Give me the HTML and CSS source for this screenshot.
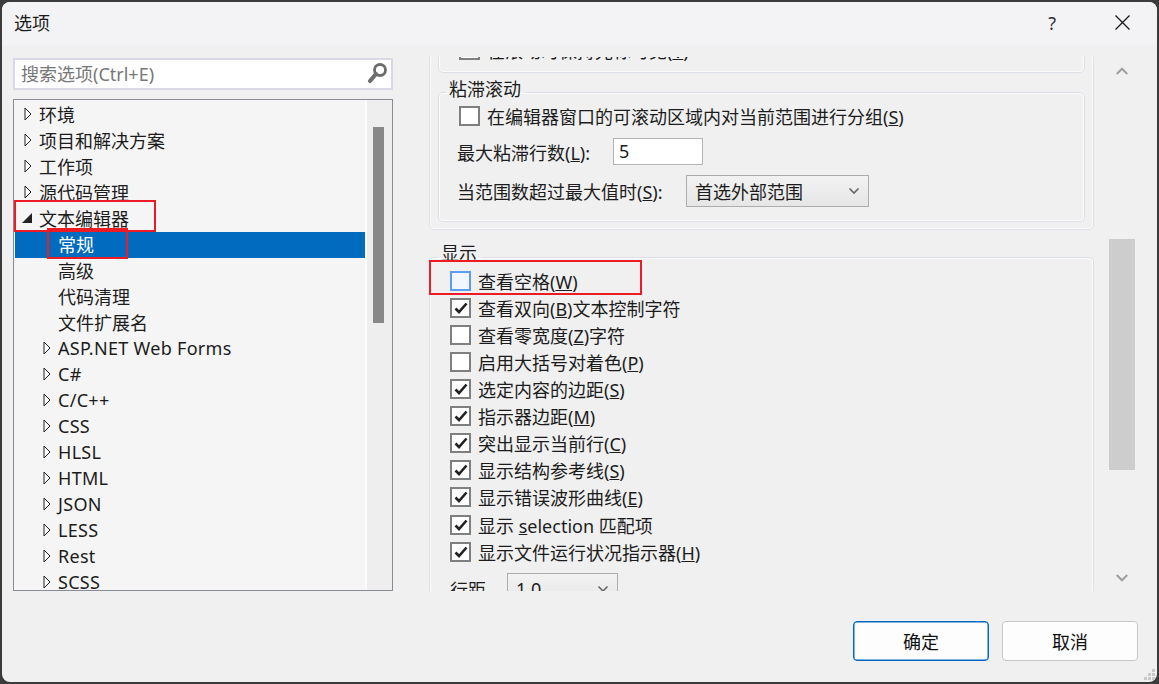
FILE: index.html
```html
<!DOCTYPE html>
<html lang="zh-CN">
<head>
    <meta charset="UTF-8">
    <title>选项</title>
    <link rel="stylesheet" href="styles.css">
</head>
<body>
    <svg class="defs" width="0" height="0">
        <symbol id="arrow" viewBox="0 0 8 14"><path d="M1 1 L7 7 L1 13 Z" fill="#fff" stroke="#222" stroke-width="1"/></symbol>
        <symbol id="tick" viewBox="0 0 14 12"><path d="M1.5 6.5 L5 10 L12.5 1.5" fill="none" stroke="#222" stroke-width="2.6"/></symbol>
        <symbol id="chev" viewBox="0 0 12 8"><path d="M1.5 1.5 L6 6 L10.5 1.5" fill="none" stroke="#666" stroke-width="1.6"/></symbol>
    </svg>
    <div class="dialog">
        <div class="titlebar">
            <span class="title">选项</span>
            <span class="help">?</span>
            <svg class="close" width="15" height="15" viewBox="0 0 15 15"><path d="M0.5 0.5 L14.5 14.5 M14.5 0.5 L0.5 14.5" stroke="#1a1a1a" stroke-width="1.3"/></svg>
        </div>
        <div class="main">
            <div class="sidebar">
                <div class="search">
                    <span>搜索选项(Ctrl+E)</span>
                    <svg width="22" height="24" viewBox="0 0 22 24"><circle cx="13" cy="9" r="5.5" fill="none" stroke="#6c6c6c" stroke-width="2.8"/><path d="M9 13 L3 20" stroke="#6c6c6c" stroke-width="4.2" stroke-linecap="round"/></svg>
                </div>
                <div class="tree">
                    <ul class="tree-list">
                        <li class="row"><svg class="arrow"><use href="#arrow"/></svg>环境</li>
                        <li class="row"><svg class="arrow"><use href="#arrow"/></svg>项目和解决方案</li>
                        <li class="row"><svg class="arrow"><use href="#arrow"/></svg>工作项</li>
                        <li class="row"><svg class="arrow"><use href="#arrow"/></svg>源代码管理</li>
                        <li class="row"><svg class="open-arrow" width="8" height="14" viewBox="0 0 10 10"><path d="M0 10 L10 10 L10 0 Z" fill="#222"/></svg>文本编辑器</li>
                        <li class="row leaf selected">常规</li>
                        <li class="row leaf">高级</li>
                        <li class="row leaf">代码清理</li>
                        <li class="row leaf">文件扩展名</li>
                        <li class="row sub"><svg class="arrow"><use href="#arrow"/></svg>ASP.NET Web Forms</li>
                        <li class="row sub"><svg class="arrow"><use href="#arrow"/></svg>C#</li>
                        <li class="row sub"><svg class="arrow"><use href="#arrow"/></svg>C/C++</li>
                        <li class="row sub"><svg class="arrow"><use href="#arrow"/></svg>CSS</li>
                        <li class="row sub"><svg class="arrow"><use href="#arrow"/></svg>HLSL</li>
                        <li class="row sub"><svg class="arrow"><use href="#arrow"/></svg>HTML</li>
                        <li class="row sub"><svg class="arrow"><use href="#arrow"/></svg>JSON</li>
                        <li class="row sub"><svg class="arrow"><use href="#arrow"/></svg>LESS</li>
                        <li class="row sub"><svg class="arrow"><use href="#arrow"/></svg>Rest</li>
                        <li class="row sub"><svg class="arrow"><use href="#arrow"/></svg>SCSS</li>
                    </ul>
                    <div class="tree-scroll"><div class="tree-thumb"></div></div>
                </div>
            </div>
            <div class="panel">
                <!-- first group is scrolled partly out of view -->
                <div class="group outer scrolled">
                    <div class="group inner first">
                        <div class="option"><span class="box"></span><span>在滚动时保持光标可见(<u>V</u>)</span></div>
                    </div>
                    <fieldset class="group inner sticky">
                        <legend>粘滞滚动</legend>
                        <div class="option"><span class="box"></span><span>在编辑器窗口的可滚动区域内对当前范围进行分组(<u>S</u>)</span></div>
                        <div class="field count">
                            <label>最大粘滞行数(<u>L</u>):</label>
                            <span class="textbox">5</span>
                        </div>
                        <div class="field limit">
                            <label>当范围数超过最大值时(<u>S</u>):</label>
                            <span class="combo wide">首选外部范围<svg width="12" height="8"><use href="#chev"/></svg></span>
                        </div>
                    </fieldset>
                </div>
                <fieldset class="group outer display">
                    <legend>显示</legend>
                    <div class="option"><span class="box focus"></span><span>查看空格(<u>W</u>)</span></div>
                    <div class="option"><span class="box"><svg width="14" height="12"><use href="#tick"/></svg></span><span>查看双向(<u>B</u>)文本控制字符</span></div>
                    <div class="option"><span class="box"></span><span>查看零宽度(<u>Z</u>)字符</span></div>
                    <div class="option"><span class="box"></span><span>启用大括号对着色(<u>P</u>)</span></div>
                    <div class="option"><span class="box"><svg width="14" height="12"><use href="#tick"/></svg></span><span>选定内容的边距(<u>S</u>)</span></div>
                    <div class="option"><span class="box"><svg width="14" height="12"><use href="#tick"/></svg></span><span>指示器边距(<u>M</u>)</span></div>
                    <div class="option"><span class="box"><svg width="14" height="12"><use href="#tick"/></svg></span><span>突出显示当前行(<u>C</u>)</span></div>
                    <div class="option"><span class="box"><svg width="14" height="12"><use href="#tick"/></svg></span><span>显示结构参考线(<u>S</u>)</span></div>
                    <div class="option"><span class="box"><svg width="14" height="12"><use href="#tick"/></svg></span><span>显示错误波形曲线(<u>E</u>)</span></div>
                    <div class="option"><span class="box"><svg width="14" height="12"><use href="#tick"/></svg></span><span>显示 <u>s</u>election 匹配项</span></div>
                    <div class="option"><span class="box"><svg width="14" height="12"><use href="#tick"/></svg></span><span>显示文件运行状况指示器(<u>H</u>)</span></div>
                    <div class="field spacing">
                        <label>行距</label>
                        <span class="combo narrow">1.0<svg width="12" height="8"><use href="#chev"/></svg></span>
                    </div>
                </fieldset>
            </div>
            <div class="panel-scroll">
                <svg class="up" width="14" height="10" viewBox="0 0 12 8"><path d="M1.5 6.5 L6 2 L10.5 6.5" fill="none" stroke="#a0a0a0" stroke-width="1.8"/></svg>
                <div class="panel-thumb"></div>
                <svg class="down" width="14" height="10" viewBox="0 0 12 8"><path d="M1.5 1.5 L6 6 L10.5 1.5" fill="none" stroke="#a0a0a0" stroke-width="1.8"/></svg>
            </div>
        </div>
        <div class="footer">
            <button class="btn primary">确定</button>
            <button class="btn">取消</button>
        </div>
        <!-- red annotation boxes drawn over the screenshot -->
        <div class="mark mark-editor"></div>
        <div class="mark mark-general"></div>
        <div class="mark mark-space"></div>
        <svg class="grip" width="14" height="14" viewBox="0 0 14 14" fill="#c8c8c8"><rect x="9" y="1" width="3" height="3"/><rect x="5" y="5" width="3" height="3"/><rect x="9" y="5" width="3" height="3"/><rect x="1" y="9" width="3" height="3"/><rect x="5" y="9" width="3" height="3"/><rect x="9" y="9" width="3" height="3"/></svg>
    </div>
</body>
</html>
```

FILE: styles.css
```css
* {
    box-sizing: border-box;
}
html, body {
    height: 100%;
}
body {
    margin: 0;
    padding: 2px;
    background-color: #3b3b3b;
    font-family: 'Noto Sans', 'Noto Sans CJK SC', sans-serif;
    font-size: 18px;
    color: #1c1c1c;
    overflow: hidden;
}
.defs {
    position: absolute;
}
.dialog {
    position: relative;
    display: flex;
    flex-direction: column;
    width: 1155px;
    height: 680px;
    background-color: #f0f0f0;
    border-radius: 8px;
    overflow: hidden;
}
.titlebar {
    display: flex;
    align-items: center;
    height: 43px;
    padding: 0 27px 2px 12px;
    background-color: #f3f3f5;
    flex-shrink: 0;
}
.title {
    flex: 1;
    margin-top: -1px;
}
.help {
    margin-right: 59px;
    color: #333;
}
.main {
    display: flex;
    padding: 12px 0 0 11px;
    height: 546px;
}
.sidebar {
    width: 380px;
    padding-top: 1px;
    flex-shrink: 0;
}
.search {
    display: flex;
    align-items: center;
    justify-content: space-between;
    height: 32px;
    padding: 0 2px 2px 6px;
    background-color: #fff;
    border: 2px solid #d9d9e6;
    color: #777;
}
.tree {
    display: flex;
    height: 492px;
    margin-top: 9px;
    background-color: #f5f5f5;
    border: 1px solid #868b96;
    overflow: hidden;
}
.tree-list {
    flex: 1;
    margin: 2px 0 0;
    padding: 0;
    list-style: none;
}
.row {
    display: flex;
    align-items: center;
    height: 26px;
    margin-left: 1px;
    padding: 0 0 2px 9px;
    white-space: nowrap;
}
.row .arrow {
    width: 8px;
    height: 14px;
    margin-right: 7px;
}
.open-arrow {
    width: 10px;
    margin-left: -2px;
    margin-right: 7px;
}
.row.sub {
    padding-left: 28px;
    letter-spacing: 0.3px;
}
.row.leaf {
    padding-left: 43px;
}
.row.selected {
    background-color: #016cbf;
    color: #fff;
}
.tree-scroll {
    width: 27px;
    background-color: #eeeeee;
    border-left: 2px solid #fbfbfb;
}
.tree-thumb {
    width: 11px;
    height: 196px;
    margin: 27px 0 0 6px;
    background-color: #888;
}
.panel {
    width: 671px;
    height: 534px;
    margin-left: 33px;
    padding: 0 3px;
    overflow: hidden;
    flex-shrink: 0;
}
.group {
    margin: 0;
    padding: 0;
    min-width: 0;
    border: 1px solid #dbe0e8;
    border-radius: 5px;
    box-shadow: inset 0 0 0 1px #fbfbfb;
}
.group legend {
    position: relative;
    padding: 0 4px 0 3px;
    line-height: 20px;
}
.outer.scrolled {
    margin-top: -33px;
    padding: 8px 8px 7px;
}
.inner.first {
    padding: 2px 0 9px 20px;
}
.inner.sticky {
    margin-top: 9px;
    padding: 0 0 14px 20px;
}
.sticky legend {
    top: -3px;
    margin-left: -13px;
}
.display legend {
    top: -4px;
    margin-left: -12px;
}
.option {
    display: flex;
    align-items: center;
    height: 27.1px;
    white-space: nowrap;
}
.box {
    display: flex;
    align-items: center;
    justify-content: center;
    width: 21px;
    height: 20px;
    margin-right: 7px;
    background-color: #fff;
    border: 2px solid #7f7f7f;
    flex-shrink: 0;
}
.box.focus {
    background-color: #f2f6ff;
    border-color: #5c9cf5;
}
.field {
    display: flex;
    align-items: center;
    white-space: nowrap;
}
.count {
    margin: 9px 0 0 -2px;
}
.count label {
    width: 156px;
}
.limit {
    margin: 10px 0 0 -2px;
}
.limit label {
    width: 229px;
}
.textbox {
    width: 90px;
    height: 27px;
    padding-left: 5px;
    line-height: 25px;
    background-color: #fff;
    border: 1px solid #b4b4b4;
}
.combo {
    display: flex;
    align-items: center;
    justify-content: space-between;
    height: 32px;
    padding: 0 8px;
    background: linear-gradient(#f2f2f2, #e6e6e6);
    border: 1px solid #adadad;
}
.combo.wide {
    width: 183px;
}
.combo.narrow {
    width: 111px;
}
.display {
    margin-top: 17px;
    padding: 0 0 40px 20px;
}
.spacing {
    margin-top: 8px;
}
.spacing label {
    width: 57px;
}
.panel-scroll {
    display: flex;
    flex-direction: column;
    align-items: center;
    width: 26px;
    height: 534px;
    margin-left: 12px;
}
.panel-scroll .up {
    margin-top: 9px;
}
.panel-thumb {
    width: 26px;
    height: 231px;
    margin-top: 163px;
    background-color: #cdcdcd;
}
.panel-scroll .down {
    margin-top: auto;
    margin-bottom: 8px;
}
.footer {
    display: flex;
    justify-content: flex-end;
    gap: 13px;
    padding: 30px 19px 0 0;
}
.btn {
    width: 136px;
    height: 40px;
    font-family: inherit;
    font-size: 18px;
    color: #111;
    background-color: #fdfdfd;
    border: 1px solid #c8c8c8;
    border-radius: 4px;
}
.btn.primary {
    border: 1px solid #0067c0;
    box-shadow: inset 0 0 0 0.5px #0067c0;
}
.mark {
    position: absolute;
    border: 2px solid #ed1c24;
}
.mark-editor {
    left: 12px;
    top: 198px;
    width: 142px;
    height: 32px;
}
.mark-general {
    left: 45px;
    top: 226px;
    width: 81px;
    height: 31px;
}
.mark-space {
    left: 427px;
    top: 258px;
    width: 213px;
    height: 35px;
}
.grip {
    position: absolute;
    right: 0;
    bottom: 0;
}
```
